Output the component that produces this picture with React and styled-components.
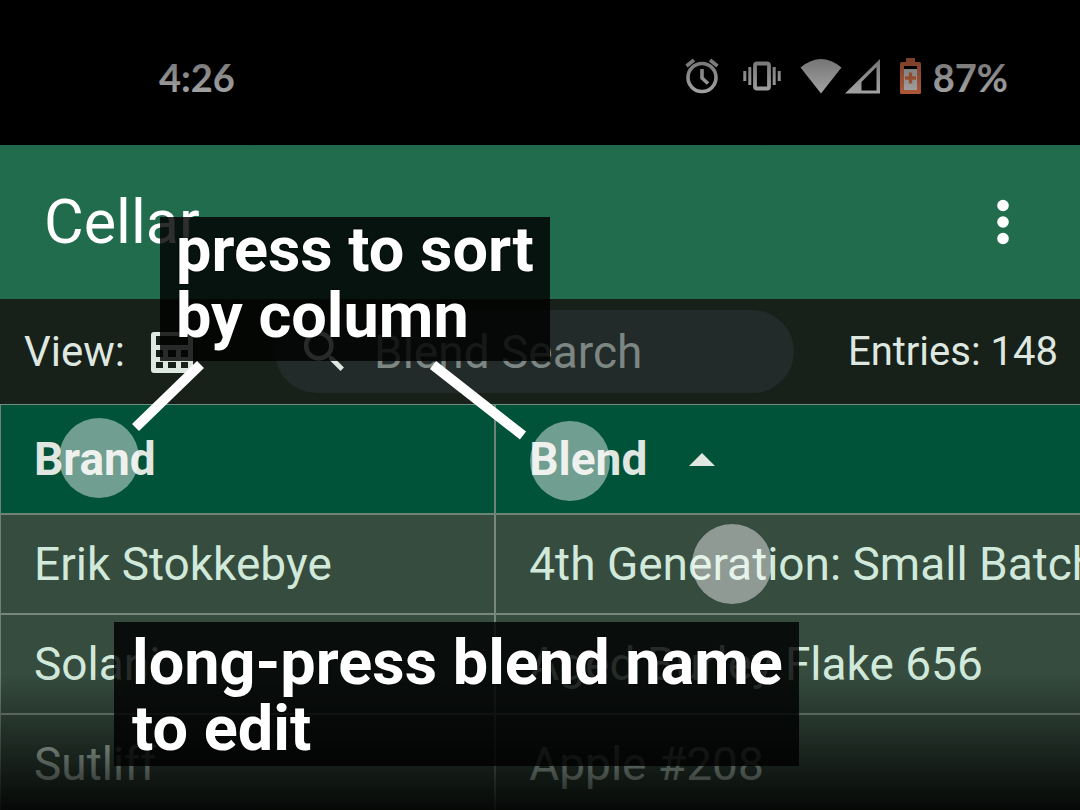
import React from "react";
import styled, { createGlobalStyle } from "styled-components";

const Global = createGlobalStyle`
  *, *::before, *::after { box-sizing: border-box; }
  body { margin: 0; background: #000; font-family: Roboto, "Liberation Sans", sans-serif; }
  button, input { font: inherit; color: inherit; border: 0; background: none; padding: 0; margin: 0; }
`;

const Screen = styled.div`
  position: relative;
  height: 100vh;
  overflow: hidden;
  background: #000;
`;

const StatusBar = styled.header`
  display: flex;
  align-items: center;
  justify-content: space-between;
  height: 145px;
  padding: 8px 72px 0 159px;
  color: #f0f0f0;
  font-family: Lato, sans-serif;
  font-size: 38px;
  font-weight: 700;
  line-height: 46px;
`;

const StatusIcons = styled.div`
  display: flex;
  align-items: center;
`;

const StatusIcon = styled.svg`
  display: block;
  margin-right: ${(p) => p.$gap}px;
`;

const AppBar = styled.div`
  display: flex;
  align-items: center;
  justify-content: space-between;
  height: 154px;
  padding: 0 60px 0 44px;
  background: #216c4d;
  color: #fff;
`;

const Title = styled.h1`
  margin: 0;
  font-size: 61px;
  line-height: 72px;
  font-weight: 400;
`;

const IconButton = styled.button`
  display: flex;
  align-items: center;
  justify-content: center;
  cursor: pointer;
`;

const Toolbar = styled.div`
  display: flex;
  align-items: center;
  height: 105px;
  padding: 0 22px 0 24px;
  background: #182119;
  color: #dfe8e0;
  font-size: 42px;
  line-height: 48px;
`;

const ViewSwitch = styled.div`
  display: flex;
  align-items: center;
  justify-content: space-between;
  flex: none;
  width: 169px;
`;

const SearchBox = styled.label`
  display: flex;
  align-items: center;
  flex: 1;
  min-width: 0;
  height: 83px;
  margin: 0 54px 0 82px;
  padding: 0 24px 0 22px;
  gap: 22px;
  border-radius: 42px;
  background: #222b29;
`;

const SearchInput = styled.input`
  flex: 1;
  min-width: 0;
  outline: none;
  font-size: 46px;
  line-height: 54px;
  &::placeholder { color: #7c8682; opacity: 1; }
`;

const Entries = styled.span`
  flex: none;
  white-space: nowrap;
  font-size: 40px;
`;

const Table = styled.table`
  width: 100%;
  table-layout: fixed;
  border-collapse: separate;
  border-spacing: 0;
  border-top: 1px solid #6b8f80;
  border-left: 1px solid #6f8077;
  font-size: 46px;
  line-height: 54px;
`;

const BrandColumn = styled.col`
  width: 45.9%;
`;

const HeadCell = styled.th`
  height: 110px;
  padding: 0 0 0 33px;
  text-align: left;
  font-weight: 700;
  color: #e0e6e0;
  background: #005239;
  border-bottom: 2px solid #6d8378;
  &:first-child { border-right: 2px solid #6d8378; }
`;

const SortButton = styled.button`
  display: flex;
  align-items: center;
  gap: 42px;
  font-weight: 700;
  cursor: pointer;
`;

const Cell = styled.td`
  height: 100px;
  padding: 0 0 0 33px;
  overflow: hidden;
  white-space: nowrap;
  color: #d1e9da;
  background: #364c3f;
  border-bottom: 2px solid #77877d;
  &:first-child { border-right: 2px solid #77877d; }
`;

const TopScrim = styled.div`
  position: absolute;
  inset: 0 0 auto 0;
  height: 152px;
  background: linear-gradient(rgba(0, 0, 0, 0.84), rgba(0, 0, 0, 0));
  pointer-events: none;
`;

const BottomScrim = styled.div`
  position: absolute;
  inset: auto 0 0 0;
  height: 136px;
  background: linear-gradient(rgba(0, 0, 0, 0), rgba(0, 0, 0, 0.9));
  pointer-events: none;
`;

const Tap = styled.span`
  position: absolute;
  left: ${(p) => p.$x}px;
  top: ${(p) => p.$y}px;
  width: 80px;
  height: 80px;
  border-radius: 50%;
  background: rgba(255, 255, 255, 0.44);
  pointer-events: none;
`;

const Caption = styled.p`
  position: absolute;
  left: ${(p) => p.$x}px;
  top: ${(p) => p.$y}px;
  margin: 0;
  padding: ${(p) => p.$padding};
  background: rgba(0, 0, 0, 0.82);
  color: #fff;
  font-size: 63px;
  line-height: 66px;
  font-weight: 700;
  white-space: nowrap;
  text-shadow: 0 0 2px #000;
  pointer-events: none;
`;

const Pointers = styled.svg`
  position: absolute;
  left: 0;
  top: 0;
  pointer-events: none;
`;

const rows = [
  ["Erik Stokkebye", "4th Generation: Small Batch"],
  ["Solani", "Aged Burley Flake 656"],
  ["Sutliff", "Apple #208"],
];

function AlarmIcon() {
  return (
    <StatusIcon $gap={24} width="34" height="38" viewBox="0 0 34 38" fill="none" stroke="currentColor" strokeWidth="3.6">
      <circle cx="17" cy="19.500" r="14" />
      <path d="M17 11V20L23 25.500" />
      <path d="M1.500 8L9 2M32.500 8L25 2" />
    </StatusIcon>
  );
}

function VibrateIcon() {
  return (
    <StatusIcon $gap={19} width="38" height="38" viewBox="0 0 38 38" fill="none" stroke="currentColor" strokeWidth="3">
      <rect x="12" y="5.500" width="14" height="25" rx="2" strokeWidth="3.800" />
      <path d="M6.800 9V27M1.800 13V23M31.200 9V27M36.200 13V23" />
    </StatusIcon>
  );
}

function WifiIcon() {
  return (
    <StatusIcon $gap={3} width="42" height="38" viewBox="0 0 42 38" fill="currentColor">
      <path d="M21 35.500L.5 9.500Q21-7.500 41.500 9.500Z" />
    </StatusIcon>
  );
}

function SignalIcon() {
  return (
    <StatusIcon $gap={20} width="35" height="38" viewBox="0 0 35 38" fill="currentColor">
      <path fillRule="evenodd" d="M0 35.500L35 1V35.500ZM16.500 32.500H31.500V9L16.500 24Z" />
    </StatusIcon>
  );
}

function BatteryIcon() {
  return (
    <StatusIcon $gap={12} width="21" height="38" viewBox="0 0 21 38">
      <path fill="#ff8052" d="M6 0H15V4H19.500Q21 4 21 5.500V34.500Q21 36 19.500 36H1.500Q0 36 0 34.500V5.500Q0 4 1.500 4H6Z" />
      <path fill="#000" d="M4 8H17V11H4Z" />
      <path fill="#f0f0f0" d="M4 11H17V32H4Z" />
      <path fill="#ff8052" d="M8.800 14.500H12.200V18.300H16V21.700H12.200V25.500H8.800V21.700H5V18.300H8.800Z" />
    </StatusIcon>
  );
}

function TableIcon() {
  return (
    <svg width="42" height="42" viewBox="0 0 42 42" fill="currentColor">
      <path
        fillRule="evenodd"
        d="M3 1H39Q42 1 42 4V39Q42 42 39 42H3Q0 42 0 39V4Q0 1 3 1ZM5 5V14H37V5ZM5 19V26H12V19ZM17 19V26H25V19ZM30 19V26H37V19ZM5 31V37H12V31ZM17 31V37H25V31ZM30 31V37H37V31Z"
      />
    </svg>
  );
}

function SearchIcon() {
  return (
    <svg width="55" height="55" viewBox="0 0 24 24" fill="#dfe8e0">
      <path d="M15.500 14h-.79l-.28-.27A6.471 6.471 0 0 0 16 9.500 6.500 6.500 0 1 0 9.500 16c1.610 0 3.090-.59 4.230-1.570l.27.28v.79l5 4.990L20.490 19l-4.990-5zm-6 0C7.010 14 5 11.990 5 9.500S7.010 5 9.500 5 14 7.010 14 9.500 11.990 14 9.500 14z" />
    </svg>
  );
}

function MoreIcon() {
  return (
    <svg width="34" height="46" viewBox="0 0 34 46" fill="#fff">
      <circle cx="17" cy="6.500" r="5.800" />
      <circle cx="17" cy="23" r="5.800" />
      <circle cx="17" cy="39.500" r="5.800" />
    </svg>
  );
}

export default function App() {
  return (
    <Screen>
      <Global />
      <StatusBar>
        <span>4:26</span>
        <StatusIcons>
          <AlarmIcon />
          <VibrateIcon />
          <WifiIcon />
          <SignalIcon />
          <BatteryIcon />
          <span>87%</span>
        </StatusIcons>
      </StatusBar>

      <AppBar>
        <Title>Cellar</Title>
        <IconButton type="button" aria-label="More options">
          <MoreIcon />
        </IconButton>
      </AppBar>

      <Toolbar>
        <ViewSwitch>
          <span>View:</span>
          <IconButton type="button" aria-label="Table view">
            <TableIcon />
          </IconButton>
        </ViewSwitch>
        <SearchBox>
          <SearchIcon />
          <SearchInput type="text" placeholder="Blend Search" aria-label="Blend Search" />
        </SearchBox>
        <Entries>Entries: 148</Entries>
      </Toolbar>

      <Table>
        <colgroup>
          <BrandColumn />
          <col />
        </colgroup>
        <thead>
          <tr>
            <HeadCell scope="col">
              <SortButton type="button">Brand</SortButton>
            </HeadCell>
            <HeadCell scope="col" aria-sort="ascending">
              <SortButton type="button">
                Blend
                <svg width="26" height="13" viewBox="0 0 26 13" fill="currentColor">
                  <path d="M0 13L13 0L26 13Z" />
                </svg>
              </SortButton>
            </HeadCell>
          </tr>
        </thead>
        <tbody>
          {rows.map(([brand, blend]) => (
            <tr key={blend}>
              <Cell>{brand}</Cell>
              <Cell>{blend}</Cell>
            </tr>
          ))}
        </tbody>
      </Table>

      <TopScrim />
      <BottomScrim />

      <Tap $x={59} $y={418} />
      <Tap $x={530} $y={421} />
      <Tap $x={692} $y={524} />

      <Caption $x={160} $y={217} $padding="0 16px 12px">
        press to sort
        <br />
        by column
      </Caption>
      <Caption $x={114} $y={622} $padding="8px 16px 4px 18px">
        long-press blend name
        <br />
        to edit
      </Caption>
      <Pointers width="560" height="460" viewBox="0 0 560 460" stroke="#fff" strokeWidth="10">
        <path d="M200.500 364.500L135.500 427.500M433 365L523 435.500" />
      </Pointers>
    </Screen>
  );
}
